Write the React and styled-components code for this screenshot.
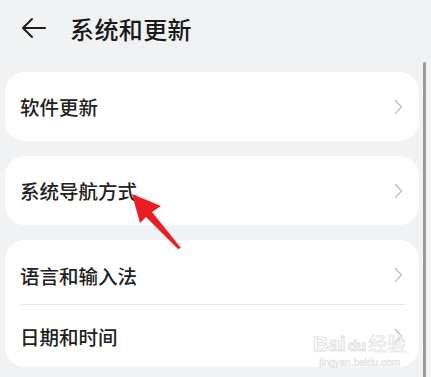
import React from 'react'
import styled, { createGlobalStyle } from 'styled-components'

const GlobalStyle = createGlobalStyle`
  html, body {
    margin: 0;
    padding: 0;
    background: #f1f2f4;
    font-family: "Noto Sans CJK SC", "Noto Sans", sans-serif;
  }
`

const groups = [
  ['软件更新'],
  ['系统导航方式'],
  ['语言和输入法', '日期和时间'],
]

export default function App() {
  return (
    <Page>
      <GlobalStyle />
      <Header>
        <BackButton>
          <svg width="26" height="22" viewBox="0 0 26 22" fill="none" stroke="#1c1c1c" strokeWidth="2" strokeLinecap="round" strokeLinejoin="round">
            <path d="M24 11H2M11 2L2 11l9 9" />
          </svg>
        </BackButton>
        <Title>系统和更新</Title>
      </Header>
      <List>
        {groups.map((items, gi) => (
          <Card key={gi}>
            {items.map((label, i) => (
              <Row key={label} single={items.length === 1} first={i === 0} divided={i > 0}>
                <Label>{label}</Label>
                <Chevron width="9" height="16" viewBox="0 0 9 16" fill="none" stroke="#c4c4c4" strokeWidth="1.6" strokeLinecap="round" strokeLinejoin="round">
                  <path d="M1.5 1.5L7.5 8l-6 6.5" />
                </Chevron>
              </Row>
            ))}
          </Card>
        ))}
      </List>
      <ScrollBar />
      <Watermark>
        <WmMain>Bai<WmPaw>du</WmPaw><WmCjk>经验</WmCjk></WmMain>
        <WmSub>jingyan.baidu.com</WmSub>
      </Watermark>
      <Pointer width="431" height="377" viewBox="0 0 431 377">
        <polygon points="132,194 161,206 152,212 181,248 178,249 146,217 140,223" fill="#ea1c24" />
      </Pointer>
    </Page>
  )
}

const Page = styled.div`
  position: relative;
  width: 431px;
  height: 377px;
  overflow: hidden;
  background: #f1f2f4;
`

const Header = styled.div`
  display: flex;
  align-items: center;
  height: 56px;
  padding-left: 21px;
`

const BackButton = styled.div`
  display: flex;
  align-items: center;
  width: 49px;
`

const Title = styled.div`
  font-size: 24px;
  font-weight: 500;
  color: #1a1a1a;
  letter-spacing: 0.4px;
`

const List = styled.div`
  display: flex;
  flex-direction: column;
  gap: 15px;
  padding: 16px 0 0 5px;
  width: 414px;
`

const Card = styled.div`
  background: #fff;
  border-radius: 20px;
  padding: 0 14px 0 15px;
`

const Row = styled.div`
  display: flex;
  align-items: center;
  justify-content: space-between;
  height: ${p => (p.single ? '69px' : p.first ? '64px' : '63px')};
  border-top: ${p => (p.divided ? '1px solid #e6e6e6' : 'none')};
  padding-top: ${p => (!p.single && p.first ? '6px' : '0')};
  box-sizing: border-box;
`

const Label = styled.span`
  font-size: 19.5px;
  font-weight: 500;
  color: #222;
`

const Chevron = styled.svg`
  margin-right: 2px;
`

const ScrollBar = styled.div`
  position: absolute;
  left: 423px;
  top: 62px;
  width: 3px;
  bottom: 0;
  background: #9a9a9a;
  border-radius: 2px 2px 0 0;
`

const Watermark = styled.div`
  position: absolute;
  left: 313px;
  top: 332px;
  display: flex;
  flex-direction: column;
  align-items: center;
  pointer-events: none;
`

const WmMain = styled.div`
  font-family: "Liberation Sans", sans-serif;
  font-size: 21px;
  font-weight: 700;
  line-height: 22px;
  color: #ffffff;
  -webkit-text-stroke: 1px #e0e0e0;
`

const WmPaw = styled.span`
  font-size: 15px;
  margin: 0 2px;
`

const WmCjk = styled.span`
  font-family: "Noto Sans CJK SC", sans-serif;
  font-size: 19px;
  font-weight: 400;
  color: #f4f4f4;
  -webkit-text-stroke: 0.5px #e2e2e2;
`

const WmSub = styled.div`
  font-family: "Liberation Sans", sans-serif;
  font-size: 10px;
  color: #ffffff;
  -webkit-text-stroke: 0.6px #e2e2e2;
`

const Pointer = styled.svg`
  position: absolute;
  left: 0;
  top: 0;
  pointer-events: none;
`
